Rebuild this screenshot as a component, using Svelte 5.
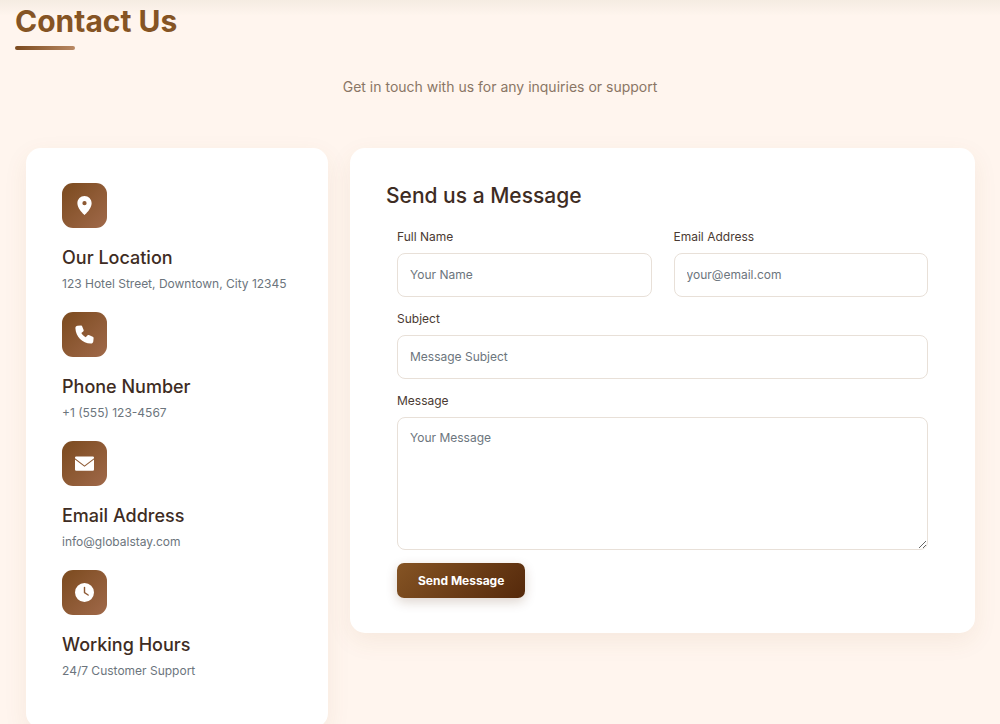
<script>
  const contacts = [
    { icon: "pin", title: "Our Location", text: "123 Hotel Street, Downtown, City 12345" },
    { icon: "phone", title: "Phone Number", text: "+1 (555) 123-4567" },
    { icon: "mail", title: "Email Address", text: "info@globalstay.com" },
    { icon: "clock", title: "Working Hours", text: "24/7 Customer Support" }
  ];

  let values = $state({ name: "", email: "", subject: "", message: "" });

  const send = (e) => {
    e.preventDefault();
    values = { name: "", email: "", subject: "", message: "" };
  };
</script>

<section>
  <h1>Contact Us</h1>
  <p class="intro">Get in touch with us for any inquiries or support</p>

  <div class="columns">
    <div class="card info">
      {#each contacts as item}
        <div class="item">
          <div class="icon">
            <svg viewBox="0 0 24 24" aria-hidden="true">
              {#if item.icon === "pin"}
                <path d="M12 0C7 0 3 4 3 9c0 3 1.500 5.800 3.300 8.600C8.200 20.500 12 24 12 24s3.800-3.500 5.700-6.400C19.500 14.800 21 12 21 9c0-5-4-9-9-9zm0 11.700a2.700 2.700 0 1 1 0-5.400 2.700 2.700 0 0 1 0 5.400z" />
              {:else if item.icon === "phone"}
                <path d="M7.700.600 3.200.900C1.600 1.100.400 2.400.500 4 1.200 15 9 22.800 20 23.500c1.600.1 2.900-1.100 3.100-2.700l.400-4.200c.1-.8-.4-1.500-1.100-1.800l-4.900-2.100c-.7-.3-1.500-.1-2 .5l-1.900 2.300C10.700 14 9.300 12.500 8 10.200l2.400-1.900c.6-.5.8-1.300.5-2L9 1.500c-.2-.6-.7-1-1.300-.9z" />
              {:else if item.icon === "mail"}
                <path d="M1.500 3h21A1.500 1.500 0 0 1 24 4.500v.8L12 14.500 0 5.300v-.8A1.500 1.500 0 0 1 1.500 3zM0 6.800l12 9.200 12-9.200v12.700a1.500 1.500 0 0 1-1.500 1.500h-21A1.500 1.500 0 0 1 0 19.500z" />
              {:else}
                <path d="M24 12a12 12 0 1 1-24 0 12 12 0 0 1 24 0zM12.900 5.500a.9.900 0 0 0-1.800 0V12c0 .400.200.700.500.900l4.500 3a.9.900 0 0 0 1-1.500l-4.200-2.800z" />
              {/if}
            </svg>
          </div>
          <h2>{item.title}</h2>
          <p>{item.text}</p>
        </div>
      {/each}
    </div>

    <div class="card message">
      <h3>Send us a Message</h3>
      <form onsubmit={send}>
        <div class="field">
          <label for="name">Full Name</label>
          <input id="name" type="text" placeholder="Your Name" bind:value={values.name} />
        </div>
        <div class="field">
          <label for="email">Email Address</label>
          <input id="email" type="email" placeholder="your@email.com" bind:value={values.email} />
        </div>
        <div class="field wide">
          <label for="subject">Subject</label>
          <input id="subject" type="text" placeholder="Message Subject" bind:value={values.subject} />
        </div>
        <div class="field wide">
          <label for="message">Message</label>
          <textarea id="message" placeholder="Your Message" bind:value={values.message}></textarea>
        </div>
        <button type="submit">Send Message</button>
      </form>
    </div>
  </div>
</section>

<style>
  :global(body) {
    background-color: #fff5ee;
    overflow: hidden;
  }

  section {
    padding: 0 25px 24px 15px;
    background: linear-gradient(#f5ece2, #fff5ee 16px);
    font-family: Inter, "Liberation Sans", sans-serif;
    color: #3e2c23;
  }

  h1,
  h2,
  h3,
  p {
    margin: 0;
  }

  h1 {
    padding-top: 3px;
    font-size: 30px;
    line-height: 36px;
    font-weight: 700;
    color: #855424;
  }

  h1::after {
    content: "";
    display: block;
    width: 60px;
    height: 4px;
    margin-top: 7px;
    border-radius: 2px;
    background: linear-gradient(90deg, #7b4a1e, #b98863);
  }

  .intro {
    margin: 26px 0 50px;
    padding-left: 10px;
    font-size: 14px;
    line-height: 22px;
    text-align: center;
    color: #8a7565;
  }

  .columns {
    display: grid;
    grid-template-columns: 302fr 625fr;
    gap: 22px;
    align-items: start;
    padding-left: 11px;
  }

  .card {
    padding: 35px 36px;
    border-radius: 15px;
    background-color: #fff;
    box-shadow: 0 8px 24px rgba(139, 90, 43, 0.08);
  }

  .info {
    display: grid;
    gap: 19px;
    padding-bottom: 48px;
  }

  .icon {
    display: grid;
    place-items: center;
    width: 45px;
    height: 45px;
    margin-bottom: 19px;
    border-radius: 11px;
    background: linear-gradient(135deg, #7b4a1e, #a0694a);
  }

  svg {
    width: 19px;
    height: 19px;
    fill: #fff;
  }

  h2 {
    margin-bottom: 6px;
    font-size: 18px;
    line-height: 22px;
    font-weight: 500;
  }

  .item p {
    font-size: 12px;
    line-height: 18px;
    color: #6c757d;
  }

  h3 {
    margin-bottom: 19px;
    font-size: 21px;
    line-height: 26px;
    font-weight: 500;
  }

  form {
    display: grid;
    grid-template-columns: 1fr 1fr;
    gap: 13px 22px;
    padding: 0 11px;
  }

  .field {
    display: grid;
    gap: 7px;
  }

  .wide {
    grid-column: 1 / -1;
  }

  label {
    font-size: 12px;
    line-height: 18px;
    color: #4a3a32;
  }

  input,
  textarea {
    box-sizing: border-box;
    width: 100%;
    padding: 11px 12px;
    border: 1px solid #e8e0d8;
    border-radius: 8px;
    background-color: #fff;
    font-family: inherit;
    font-size: 12px;
    line-height: 18px;
    color: #3e2c23;
  }

  input {
    height: 44px;
    padding-bottom: 13px;
  }

  textarea {
    height: 133px;
    resize: vertical;
  }

  ::placeholder {
    color: #6c757d;
  }

  button {
    justify-self: start;
    padding: 9px 21px;
    border: 0;
    border-radius: 7px;
    background: linear-gradient(135deg, #855424, #55290b);
    box-shadow: 0 4px 12px rgba(85, 41, 11, 0.2);
    font-family: inherit;
    font-size: 12px;
    line-height: 17px;
    font-weight: 700;
    color: #fff;
    cursor: pointer;
  }
</style>
